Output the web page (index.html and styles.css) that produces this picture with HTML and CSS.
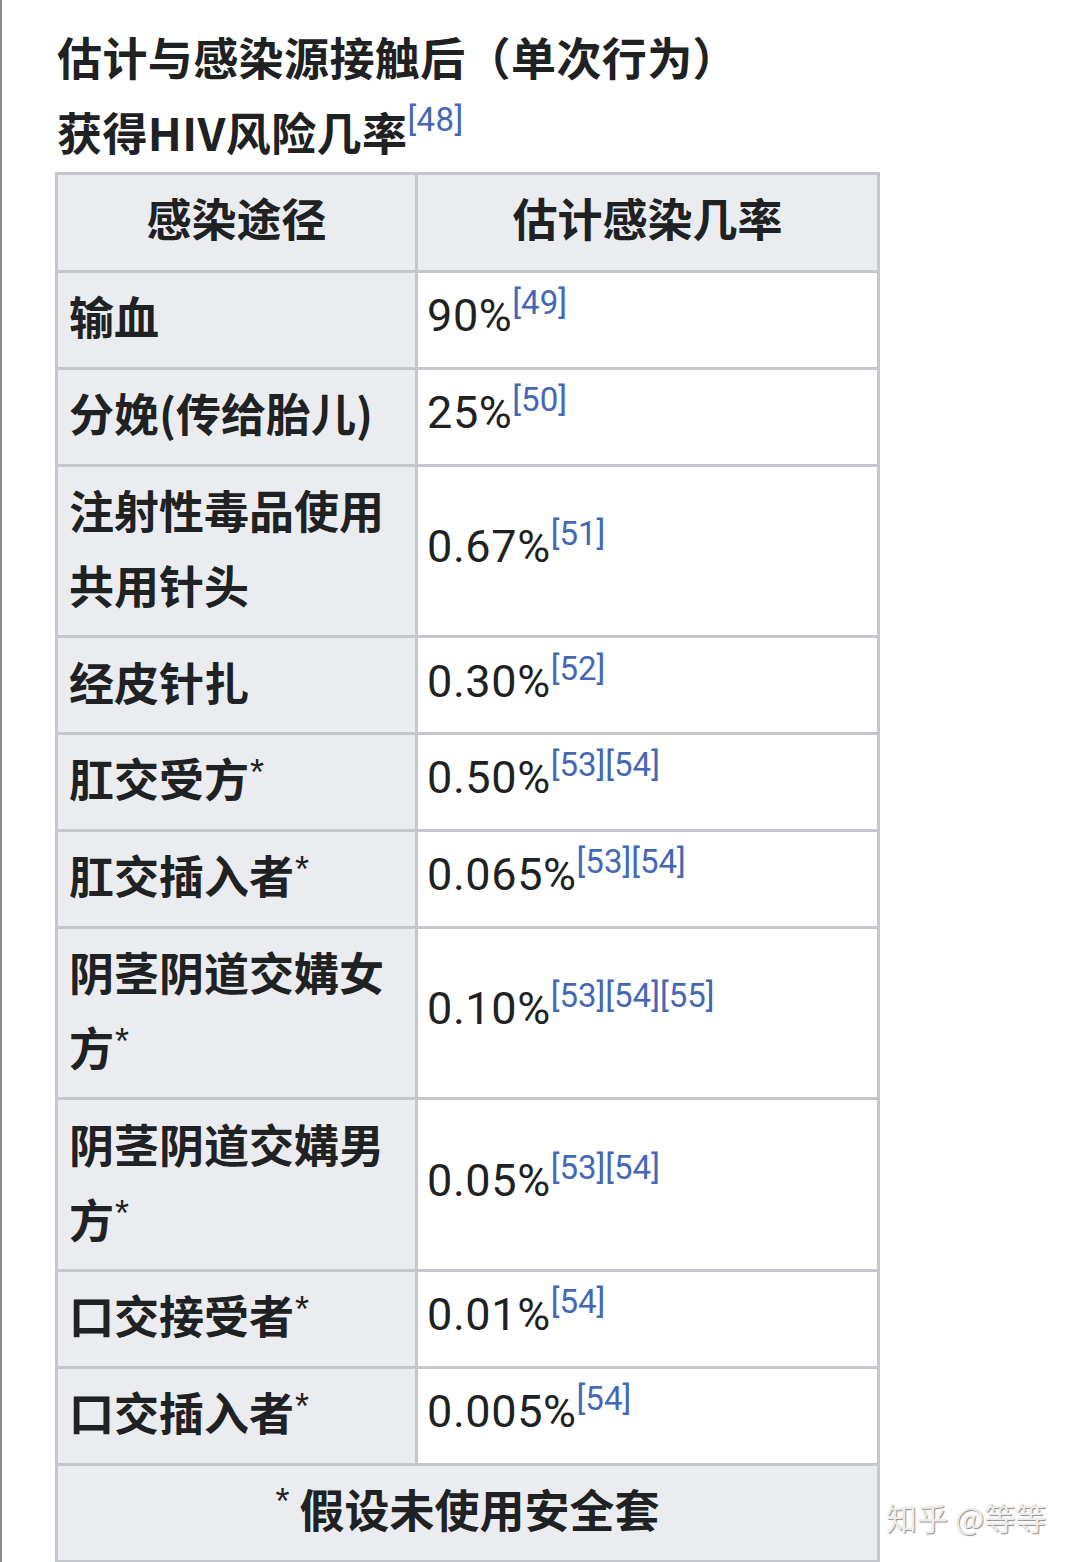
FILE: index.html
```html
<!DOCTYPE html>
<html lang="zh-CN">
<head>
<meta charset="utf-8">
<title>估计与感染源接触后获得HIV风险几率</title>
<link rel="stylesheet" href="styles.css">
</head>
<body>
<div class="page">
  <h2 class="title">估计与感染源接触后（单次行为）<br>获得HIV风险几率<sup class="ref">[48]</sup></h2>
  <table class="risk">
    <colgroup><col class="c1"><col class="c2"></colgroup>
    <thead>
      <tr><th class="head">感染途径</th><th class="head">估计感染几率</th></tr>
    </thead>
    <tbody>
      <tr><th>输血</th><td>90%<sup class="ref">[49]</sup></td></tr>
      <tr><th>分娩(传给胎儿)</th><td>25%<sup class="ref">[50]</sup></td></tr>
      <tr><th>注射性毒品使用共用针头</th><td>0.67%<sup class="ref">[51]</sup></td></tr>
      <tr><th>经皮针扎</th><td>0.30%<sup class="ref">[52]</sup></td></tr>
      <tr><th>肛交受方<sup class="ast">*</sup></th><td>0.50%<sup class="ref">[53][54]</sup></td></tr>
      <tr><th>肛交插入者<sup class="ast">*</sup></th><td>0.065%<sup class="ref">[53][54]</sup></td></tr>
      <tr><th>阴茎阴道交媾女方<sup class="ast">*</sup></th><td>0.10%<sup class="ref">[53][54][55]</sup></td></tr>
      <tr><th>阴茎阴道交媾男方<sup class="ast">*</sup></th><td>0.05%<sup class="ref">[53][54]</sup></td></tr>
      <tr><th>口交接受者<sup class="ast">*</sup></th><td>0.01%<sup class="ref">[54]</sup></td></tr>
      <tr><th>口交插入者<sup class="ast">*</sup></th><td>0.005%<sup class="ref">[54]</sup></td></tr>
    </tbody>
    <tfoot>
      <tr><th colspan="2" class="foot"><span class="fast">*</span> 假设未使用安全套</th></tr>
    </tfoot>
  </table>
</div>
<div class="watermark">知乎 @等等</div>
</body>
</html>
```

FILE: styles.css
```css
html, body {
  margin: 0;
  padding: 0;
  background: #ffffff;
}
body {
  width: 1080px;
  height: 1562px;
  overflow: hidden;
  position: relative;
  box-sizing: border-box;
  border-left: 2px solid #8c8c8c;
  font-family: "Noto Sans CJK SC", "Noto Sans", sans-serif;
  color: #202122;
}
.page {
  padding: 19px 0 0 53px;
}
.title {
  margin: 0 0 3px 2px;
  font-size: 45px;
  line-height: 75px;
  font-weight: 700;
  letter-spacing: 0.4px;
}
.ref {
  font-family: Roboto, "Liberation Sans", sans-serif;
  font-weight: 400;
  font-size: 33px;
  line-height: 0;
  color: #4567b7;
  vertical-align: 17px;
}
.title .ref {
  font-size: 33px;
  vertical-align: 20px;
}
.risk {
  border-collapse: collapse;
  table-layout: fixed;
  width: 822px;
}
.c1 { width: 360px; }
.c2 { width: 462px; }
.risk th, .risk td {
  border: 3px solid #c4c8cd;
  padding: 5.2px 11px 13.6px 11px;
  font-size: 45px;
  line-height: 75px;
  vertical-align: middle;
  text-align: left;
}
.risk th {
  background: #eaecf0;
  font-weight: 700;
}
.risk td {
  background: #ffffff;
  font-family: Roboto, "Liberation Sans", sans-serif;
  font-weight: 400;
  letter-spacing: 0.6px;
  padding-left: 9px;
}
.risk td .ref { letter-spacing: 0; }
.risk th.head {
  text-align: center;
  padding-top: 5px;
  padding-bottom: 15px;
}
.ast {
  font-family: "Liberation Sans", sans-serif;
  font-size: 36px;
  font-weight: 400;
  line-height: 0;
  margin-left: 1px;
  vertical-align: 12px;
}
.risk th.foot {
  text-align: center;
  border-bottom: 3px solid #c4c8cd;
}
.fast {
  font-family: "Liberation Sans", sans-serif;
  font-weight: 400;
  font-size: 36px;
  vertical-align: 14px;
  line-height: 0;
}
.watermark {
  position: absolute;
  left: 884px;
  top: 1497px;
  font-size: 31px;
  line-height: 40px;
  color: #ececec;
  text-shadow: 1px 1px 1px #8f8f8f;
  letter-spacing: 0;
  font-weight: 400;
}
```
